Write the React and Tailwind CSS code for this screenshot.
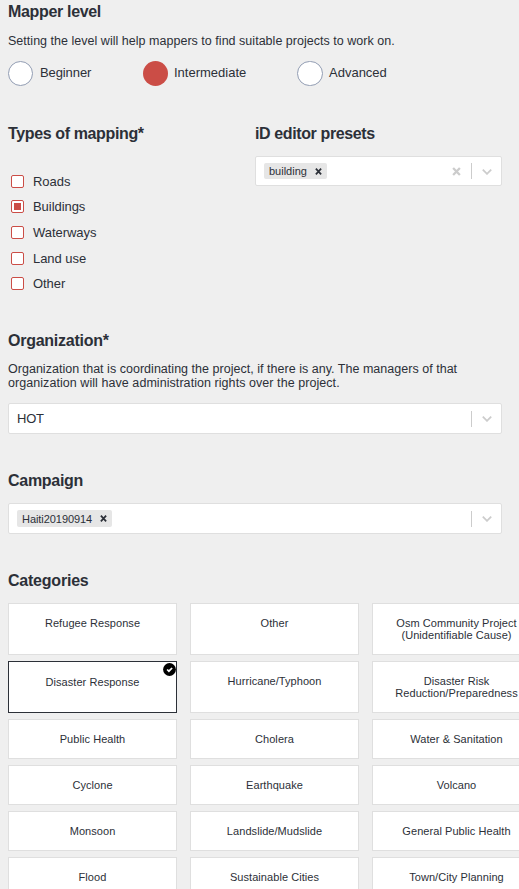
import React from 'react';

const levels = [
  { label: 'Beginner', col: 'w-[135px]', dot: 'w-[25px] bg-white border border-[#929db3]', text: 'ml-[7px] tracking-[-0.1px]' },
  { label: 'Intermediate', col: 'w-[154px]', dot: 'w-[25px] bg-[#cb4d46]', text: 'ml-[6px]' },
  { label: 'Advanced', col: '', dot: 'w-[26px] bg-white border border-[#929db3]', text: 'ml-[6px]' },
];

const mappingTypes = [
  { label: 'Roads', row: 'h-[25px]' },
  { label: 'Buildings', row: 'h-[26px]', checked: true },
  { label: 'Waterways', row: 'h-[26px]' },
  { label: 'Land use', row: 'h-[25px]' },
  { label: 'Other', row: 'h-[26px]' },
];

const categories = [
  { label: 'Refugee Response', tall: true },
  { label: 'Other', tall: true },
  { label: 'Osm Community Project (Unidentifiable Cause)', tall: true },
  { label: 'Disaster Response', tall: true, selected: true },
  { label: 'Hurricane/Typhoon', tall: true },
  { label: 'Disaster Risk Reduction/Preparedness', tall: true },
  { label: 'Public Health' },
  { label: 'Cholera' },
  { label: 'Water & Sanitation' },
  { label: 'Cyclone' },
  { label: 'Earthquake' },
  { label: 'Volcano' },
  { label: 'Monsoon' },
  { label: 'Landslide/Mudslide' },
  { label: 'General Public Health' },
  { label: 'Flood' },
  { label: 'Sustainable Cities' },
  { label: 'Town/City Planning' },
];

function Heading({ children, className = '' }) {
  return <h3 className={`whitespace-nowrap text-[16px] leading-5 font-bold ${className}`}>{children}</h3>;
}

function Cross({ className }) {
  return (
    <svg viewBox="0 0 8 8" className={className} stroke="currentColor" fill="none">
      <path d="M1 .8L7 7.2M7 .8L1 7.2" strokeWidth="2" />
    </svg>
  );
}

function Tag({ children, className = '' }) {
  return (
    <span className={`flex items-center rounded-xs bg-[#e6e6e6] pl-[5px] text-[11px] leading-4 ${className}`}>
      <span className="whitespace-nowrap">{children}</span>
      <Cross className="mr-[5px] ml-auto size-[7px]" />
    </span>
  );
}

function Select({ children, clearable, className = '' }) {
  return (
    <div className={`flex items-center rounded-xs border border-[#dfdfdf] bg-white pl-2 ${className}`}>
      {children}
      <div className="ml-auto flex items-center text-[#cccccc]">
        {clearable && <Cross className="mr-[10px] size-[9px]" />}
        <span className="h-4 w-px bg-[#cccccc]" />
        <svg viewBox="0 0 10 6" className="mt-px mr-[9px] ml-[10px] h-[6px] w-[10px]" fill="none" stroke="currentColor" strokeWidth="1.8">
          <path d="M.8 .7L5 4.8L9.2 .7" />
        </svg>
      </div>
    </div>
  );
}

function Category({ label, tall, selected }) {
  return (
    <div
      className={`relative border bg-white px-4 text-center text-[11px] leading-3 tracking-[0.06px] ${tall ? 'h-[52px]' : 'h-10'} ${
        selected ? 'border-[#2c3038] pt-[14px]' : 'border-[#dfdfdf] pt-[13px]'
      }`}
    >
      {label}
      {selected && (
        <svg viewBox="0 0 13 13" className="absolute top-[1px] right-0 size-[13px]">
          <circle cx="6.5" cy="6.5" r="6.4" fill="#000" />
          <path d="M4.1 6.5L5.9 8.2L9.1 5" fill="none" stroke="#fff" strokeWidth="1.7" />
        </svg>
      )}
    </div>
  );
}

export default function App() {
  return (
    <div className="h-[889px] w-[519px] overflow-hidden bg-[#efefef] pl-2 font-['Liberation_Sans',Arial,sans-serif] text-[#2c3038]">
      <section className="h-[124px] pt-[2px]">
        <Heading className="tracking-[-0.33px]">Mapper level</Heading>
        <p className="mt-[11px] text-[12.5px] leading-4 tracking-[0.025px] whitespace-nowrap">
          Setting the level will help mappers to find suitable projects to work on.
        </p>
        <div className="mt-[12px] flex">
          {levels.map((l) => (
            <div key={l.label} className={`flex items-center ${l.col}`}>
              <span className={`h-[25px] shrink-0 rounded-full ${l.dot}`} />
              <span className={`-mt-px text-[13px] leading-4 ${l.text}`}>{l.label}</span>
            </div>
          ))}
        </div>
      </section>

      <section className="flex h-[207px]">
        <div className="w-[247px]">
          <Heading className="tracking-[-0.37px]">Types of mapping*</Heading>
          <div className="mt-[31px] pl-[3px]">
            {mappingTypes.map((t) => (
              <div key={t.label} className={`flex items-start ${t.row}`}>
                <span className="flex size-[13px] items-center justify-center rounded-xs border border-[#cb4d46] bg-white">
                  {t.checked && <span className="size-[7px] bg-[#cb4d46]" />}
                </span>
                <span className="-mt-px ml-[9px] text-[13px] leading-4 tracking-[-0.05px]">{t.label}</span>
              </div>
            ))}
          </div>
        </div>
        <div className="w-[247px]">
          <Heading className="tracking-[-0.38px]">iD editor presets</Heading>
          <Select clearable className="mt-[12px] h-[30px]">
            <Tag className="h-4 w-[63px]">building</Tag>
          </Select>
        </div>
      </section>

      <section className="h-[140px] w-[494px]">
        <Heading className="tracking-[-0.25px]">Organization*</Heading>
        <p className="mt-[11px] text-[12.5px] leading-[14px] whitespace-nowrap">
          <span className="block tracking-[0.025px]">
            Organization that is coordinating the project, if there is any. The managers of that
          </span>
          <span className="block tracking-[0.06px]">
            organization will have administration rights over the project.
          </span>
        </p>
        <Select className="mt-[13px] h-[31px]">
          <span className="text-[13px] leading-4 tracking-[-0.2px]">HOT</span>
        </Select>
      </section>

      <section className="h-[100px] w-[494px]">
        <Heading className="tracking-[-0.28px]">Campaign</Heading>
        <Select className="mt-[12px] h-[31px]">
          <Tag className="h-[17px] w-[95px] tracking-[-0.06px]">Haiti20190914</Tag>
        </Select>
      </section>

      <section>
        <Heading className="tracking-[-0.22px]">Categories</Heading>
        <div className="mt-[12px] grid grid-cols-[169px_169px_169px] gap-x-[13px] gap-y-1.5">
          {categories.map((c) => (
            <Category key={c.label} {...c} />
          ))}
        </div>
      </section>
    </div>
  );
}
